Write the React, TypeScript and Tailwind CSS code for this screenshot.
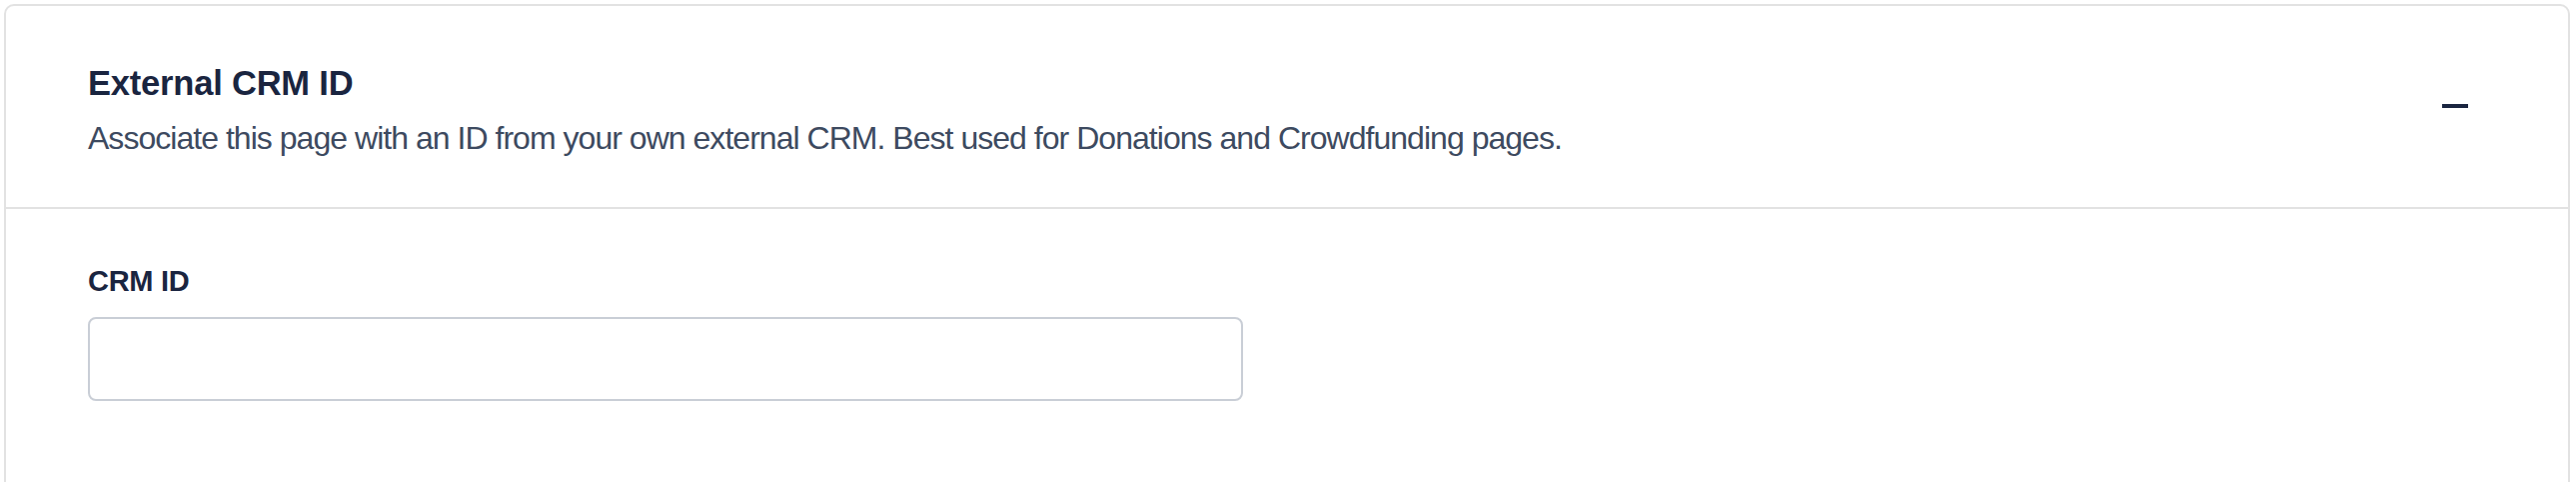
export default function App() {
  return (
    <div className="w-[2578px] h-[482px] bg-white pt-[4px] pl-[4px] pr-[6px] overflow-hidden" style={{ fontFamily: '"Liberation Sans", Arial, sans-serif' }}>
      <div className="h-[490px] rounded-[10px] border-2 border-[#e2e2e2] bg-white">
        <div className="flex items-center justify-between pl-[82px] pr-[100px] pt-[57px] pb-[49px]">
          <div className="flex flex-col gap-[15px]">
            <h2 className="text-[34.5px] leading-[40px] font-bold tracking-[-0.2px] text-[#1a2540]">External CRM ID</h2>
            <p className="text-[32px] leading-[40px] tracking-[-0.97px] text-[#3d4a60]">
              Associate this page with an ID from your own external CRM. Best used for Donations and Crowdfunding pages.
            </p>
          </div>
          <button className="w-[26px] h-[26px] mb-[9px] flex items-center">
            <span className="block w-[26px] h-[4px] bg-[#1a2540]" />
          </button>
        </div>
        <div className="border-t-2 border-[#e2e2e2] pl-[82px] pt-[54px]">
          <label className="block text-[29px] leading-[36px] font-bold tracking-[-0.3px] text-[#1a2540]">CRM ID</label>
          <input
            type="text"
            className="mt-[18px] block w-[1156px] h-[84px] rounded-[8px] border-2 border-[#c9ced6] bg-white px-[20px] text-[32px] outline-none"
          />
        </div>
      </div>
    </div>
  );
}
